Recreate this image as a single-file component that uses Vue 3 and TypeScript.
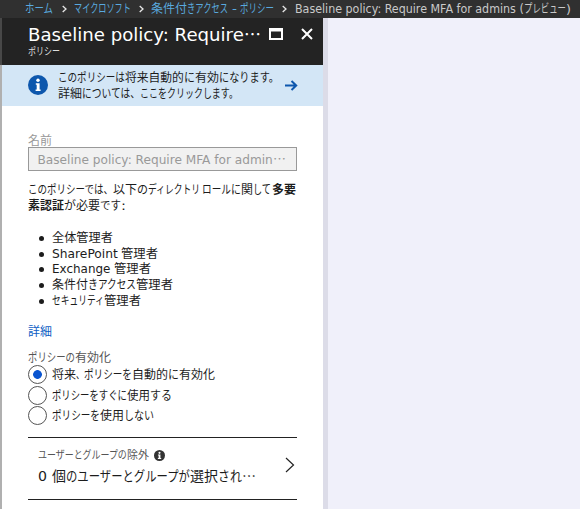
<script setup lang="ts">
import { h, ref, type FunctionalComponent, type VNode } from 'vue'

// A run of text: content, start offset, advance width, optional bold
type Run = [string, number, number, boolean?]

// Scales a run horizontally from its natural width to its compact width
function fit(node: VNode, x: number, width: number) {
  const el = node.el as SVGTextElement
  const natural = el.getComputedTextLength() || width
  el.setAttribute('transform', `translate(${x} 12) scale(${width / natural} 1)`)
}

const Line: FunctionalComponent<{ runs: Run[]; w: number }> = (props) =>
  h('svg', { class: 'line', width: props.w, height: 16 },
    props.runs.map(([text, x, len, bold]) =>
      h('text', {
        'font-weight': bold ? 700 : 400,
        'font-family': /[^\x00-\x7f]/.test(text)
          ? '"Noto Sans CJK JP", sans-serif'
          : '"DejaVu Sans", "Noto Sans CJK JP", sans-serif',
        onVnodeMounted: (node: VNode) => fit(node, x, len),
      }, text)))
Line.props = ['runs', 'w']

const crumbs: { w: number; runs: Run[] }[] = [
  { w: 37, runs: [['ホーム', 0, 28]] },
  { w: 65, runs: [['マイクロソフト', 0, 57]] },
  { w: 131, runs: [['条件付', 0, 36], ['きアクセス', 36, 41], ['-', 81, 5], ['ポリシー', 89, 34]] },
]
const current: Run[] = [['Baseline policy: Require MFA for admins (', 0, 229], ['プレビュー', 229, 42], [')', 271, 5]]
const title: Run[] = [['Baseline policy: Require', 0, 216], ['…', 216, 17]]
const subtitle: Run[] = [['ポリシー', 0, 32]]
const notice: Run[][] = [
  [['このポリシーは', 0, 67], ['将来自動的', 67, 59], ['に', 126, 11], ['有効', 137, 24], ['になります。', 161, 60]],
  [['詳細', 0, 24], ['については、', 24, 58], ['ここをクリックします。', 82, 98]],
]
const fieldText: Run[] = [['Baseline policy: Require MFA for admin', -0.5, 235.5], ['…', 235, 13]]
const description: Run[][] = [
  [['このポリシーでは、', 0, 85], ['以下', 85, 24], ['の', 109, 11], ['ディレクトリ', 120, 52], ['ロール', 174, 29], ['に', 203, 10], ['関', 213, 12], ['して', 225, 18], ['多要', 244, 24, true]],
  [['素認証', 0, 36, true], ['が', 36, 12], ['必要', 48, 24], ['です', 72, 21], [':', 93, 5]],
]
const roles: Run[][] = [
  [['全体管理者', 0, 61]],
  [['SharePoint', 0, 66], ['管理者', 69, 37]],
  [['Exchange', 0, 58.5], ['管理者', 62, 37]],
  [['条件付', 0, 36], ['き', 36, 10], ['アクセス', 46, 38], ['管理者', 84, 37]],
  [['セキュリティ', 0, 52], ['管理者', 52, 37]],
]
const options: Run[][] = [
  [['将来', 0, 24], ['、', 24, 8], ['ポリシーを', 32, 48], ['自動的', 80, 36], ['に', 116, 11], ['有効化', 127, 36]],
  [['ポリシーをすぐに', 0, 75], ['使用', 75, 23], ['する', 98, 22]],
  [['ポリシーを', 0, 48], ['使用', 48, 24], ['しない', 72, 30]],
]
const excludeLabel: Run[] = [['ユーザーとグループの', 0, 89], ['除外', 89, 22]]
const excludeValue: Run[] = [['0', 0, 9], ['個', 14, 14], ['のユーザーとグループが', 28, 124], ['選択', 152, 28], ['され', 180, 24], ['…', 204, 14]]
const selected = ref(0)
</script>

<template>
  <div class="shell">
    <nav class="crumbs">
      <template v-for="(c, i) in crumbs" :key="i">
        <Line class="crumb" :runs="c.runs" :w="c.w" />
        <svg class="sep" width="12" height="16"><path d="M.7 5l3.3 3-3.3 3" /></svg>
      </template>
      <Line class="current" :runs="current" :w="280" />
    </nav>
    <div class="body">
      <section class="blade">
        <header class="head">
          <div class="names">
            <Line class="title" :runs="title" :w="240" />
            <Line class="subtitle" :runs="subtitle" :w="100" />
          </div>
          <svg class="maximize" width="14" height="13"><path d="M1 1h12v10H1z" /><path d="M1 2.5h12" /></svg>
          <svg class="close" width="12" height="12"><path d="M1 1l10 10M11 1L1 11" /></svg>
        </header>
        <div class="notice">
          <svg class="info" width="20" height="20" viewBox="0 0 20 20">
            <circle cx="10" cy="10" r="10" /><circle class="mark" cx="10" cy="5.2" r="1.7" />
            <path class="mark" d="M7.8 8.2h3.8v6.4h1v1.5H7.6v-1.5h1.1V9.7h-.9z" />
          </svg>
          <div class="noticeText">
            <Line v-for="(r, i) in notice" :key="i" :runs="r" :w="224" />
          </div>
          <svg class="arrow" width="13" height="11"><path d="M0 5.5h11M6.5 1l4.7 4.5-4.7 4.5" /></svg>
        </div>
        <div class="content">
          <Line class="label" :runs="[['名前', 0, 24]]" :w="100" />
          <div class="field"><Line :runs="fieldText" :w="250" /></div>
          <div class="description">
            <Line v-for="(r, i) in description" :key="i" :runs="r" :w="271" />
          </div>
          <ul class="roles">
            <li v-for="(r, i) in roles" :key="i"><Line :runs="r" :w="200" /></li>
          </ul>
          <a class="link"><Line :runs="[['詳細', 0, 24]]" :w="24" /></a>
          <Line class="group" :runs="[['ポリシーの', 0, 47], ['有効化', 47, 36]]" :w="120" />
          <div class="options">
            <div v-for="(r, i) in options" :key="i" class="option" @click="selected = i">
              <span class="radio" :class="{ on: selected === i }"></span>
              <Line :runs="r" :w="200" />
            </div>
          </div>
          <div class="exclude">
            <div>
              <div class="excludeHead">
                <Line class="small" :runs="excludeLabel" :w="116" />
                <svg class="info dark" width="11" height="11" viewBox="0 0 20 20">
                  <circle cx="10" cy="10" r="10" /><circle class="mark" cx="10" cy="5.2" r="1.9" />
                  <path class="mark" d="M7.2 8.2h4.5v6.2h1.4v1.9H7v-1.9h1.4V10H7.2z" />
                </svg>
              </div>
              <Line class="value" :runs="excludeValue" :w="230" />
            </div>
            <svg class="chevron" width="10" height="16"><path d="M1 1l7.5 7L1 15" /></svg>
          </div>
        </div>
      </section>
      <div class="edge"></div>
    </div>
  </div>
</template>

<style>
body {
  overflow: hidden;
}
</style>

<style scoped>
.shell {
  height: 509px;
  overflow: hidden;
  display: flex;
  flex-direction: column;
  background: #f0f0fa;
  font-size: 12px;
}
svg {
  display: block;
  flex: none;
}
.line {
  overflow: visible;
  fill: #1c1c1c;
}
.crumbs {
  flex: none;
  height: 18px;
  box-sizing: border-box;
  display: flex;
  padding: 1px 0 0 25px;
  background: #303030;
}
.crumb {
  fill: #59a9df;
}
.sep {
  fill: none;
  stroke: #e6e6e6;
  stroke-width: 1.3;
}
.current {
  margin-left: 0.5px;
  fill: #c9c9c9;
}
.body {
  flex: 1;
  display: flex;
}
.blade {
  width: 321px;
  border-left: 2px solid #b0b0b0;
  background: #fff;
}
.edge {
  width: 5px;
  background: #dcdce8;
}
.head {
  height: 47px;
  display: flex;
  margin-left: -2px;
  border-left: 2px solid #484848;
  background: #232323;
}
.names {
  width: 241px;
  padding: 11px 0 0 26px;
}
.title {
  fill: #fff;
  font-size: 17.5px;
}
.subtitle {
  margin-top: -2px;
  fill: #dedede;
  font-size: 10.5px;
}
.maximize {
  margin-top: 10px;
  fill: none;
  stroke: #fff;
  stroke-width: 2;
}
.close {
  margin: 10px 0 0 18px;
  fill: none;
  stroke: #fff;
  stroke-width: 2;
}
.notice {
  height: 41px;
  box-sizing: border-box;
  display: flex;
  padding: 5px 0 0 26px;
  background: #d3e6f6;
}
.info {
  fill: #0d57ad;
}
.notice > .info {
  margin-top: 5px;
}
.mark {
  fill: #fff;
}
.noticeText {
  width: 227px;
  padding-left: 10px;
}
.arrow {
  margin-top: 10px;
  fill: none;
  stroke: #0d57ad;
  stroke-width: 2;
}
.content {
  width: 269px;
  padding: 27px 0 0 26px;
}
.label {
  fill: #999;
}
.field {
  height: 24px;
  box-sizing: border-box;
  margin-top: -2px;
  padding: 4px 0 0 9px;
  border: 1px solid #999;
  background: #f1f1f1;
}
.field .line {
  fill: #999;
  font-size: 12.5px;
}
.description {
  padding-top: 11px;
}
.roles {
  list-style: none;
  margin: 0;
  padding: 16px 0 0 11px;
}
.roles li {
  height: 15.7px;
  display: flex;
}
.roles li::before {
  content: "";
  width: 5px;
  height: 5px;
  margin: 6px 8px 0 0;
  border-radius: 50%;
  background: #1c1c1c;
}
.link {
  display: block;
  padding-top: 16px;
}
.link .line {
  fill: #0d5dc4;
}
.group {
  margin-top: 10px;
  fill: #555;
}
.options {
  margin-top: -1px;
}
.option {
  height: 20.5px;
  display: flex;
  gap: 5px;
}
.option .line {
  margin-top: 2px;
}
.radio {
  width: 19px;
  height: 19px;
  box-sizing: border-box;
  border: 1px solid #555;
  border-radius: 50%;
  background: #fff;
}
.radio.on {
  background: radial-gradient(circle, #0a55d0 4px, #fff 4.7px);
}
.exclude {
  height: 63px;
  box-sizing: border-box;
  display: flex;
  justify-content: space-between;
  margin-top: 10.5px;
  padding: 9px 2px 0 10px;
  border-top: 1.5px solid #222;
  border-bottom: 1.5px solid #222;
}
.excludeHead {
  display: flex;
}
.small {
  fill: #555;
  font-size: 11px;
}
.info.dark {
  margin-top: 3px;
  fill: #333;
}
.value {
  margin-top: 6px;
  font-size: 14px;
}
.chevron {
  margin-top: 10px;
  fill: none;
  stroke: #222;
  stroke-width: 1.2;
}
</style>
